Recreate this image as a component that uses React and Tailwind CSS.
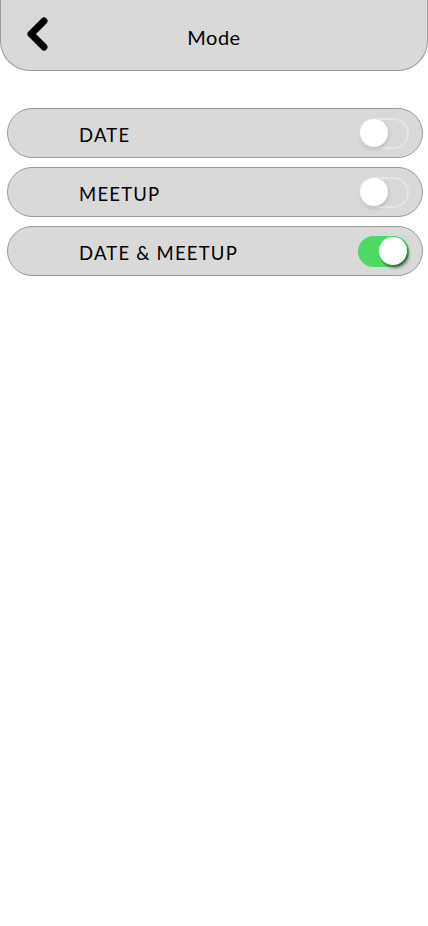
import React, { useState } from "react";

const Toggle = ({ on, onChange }) => {
  return (
    <button
      type="button"
      onClick={onChange}
      className={`relative w-[51px] h-[31px] rounded-full shrink-0 transition-colors ${
        on ? "bg-[#4cd964]" : "bg-[#d9d9d9] border-2 border-[#e6e6e6]"
      }`}
    >
      <span
        className={`absolute top-1/2 -translate-y-1/2 w-[28px] h-[28px] rounded-full bg-white ${
          on
            ? "left-[21px] shadow-[2px_3px_3px_rgba(0,0,0,0.45)]"
            : "left-0 shadow-[0_2px_4px_rgba(0,0,0,0.2)]"
        }`}
      />
    </button>
  );
};

const ModeRow = ({ label, on, onChange }) => {
  return (
    <div className="flex items-center justify-between h-[50px] rounded-full bg-[#d9d9d9] border border-[#9a9a9a] pl-[71px] pr-[13px]">
      <span className="text-[18.5px] tracking-[1.2px] text-black pt-[5px]">{label}</span>
      <Toggle on={on} onChange={onChange} />
    </div>
  );
};

export default function App() {
  const [mode, setMode] = useState("both");
  const modes = [
    { key: "date", label: "DATE" },
    { key: "meetup", label: "MEETUP" },
    { key: "both", label: "DATE & MEETUP" },
  ];

  return (
    <div className="min-h-[926px] w-[428px] bg-white font-['Lato','DejaVu_Sans',sans-serif]">
      <header className="relative h-[71px] bg-[#d9d9d9] border border-t-0 border-[#9a9a9a] rounded-b-[30px] flex items-center justify-center pt-[4px]">
        <button type="button" className="absolute left-[24px] top-[16px] w-[26px] h-[36px]">
          <svg viewBox="0 0 26 36" className="w-[26px] h-[36px]">
            <path
              d="M19 5 L6 18 L19 31"
              fill="none"
              stroke="#000"
              strokeWidth="7"
              strokeLinecap="round"
              strokeLinejoin="round"
            />
          </svg>
        </button>
        <h1 className="text-[20px] tracking-[0.5px] text-black">Mode</h1>
      </header>

      <div className="flex flex-col gap-[9px] pl-[7px] pr-[5px] pt-[37px]">
        {modes.map((m) => (
          <ModeRow
            key={m.key}
            label={m.label}
            on={mode === m.key}
            onChange={() => setMode(m.key)}
          />
        ))}
      </div>
    </div>
  );
}
